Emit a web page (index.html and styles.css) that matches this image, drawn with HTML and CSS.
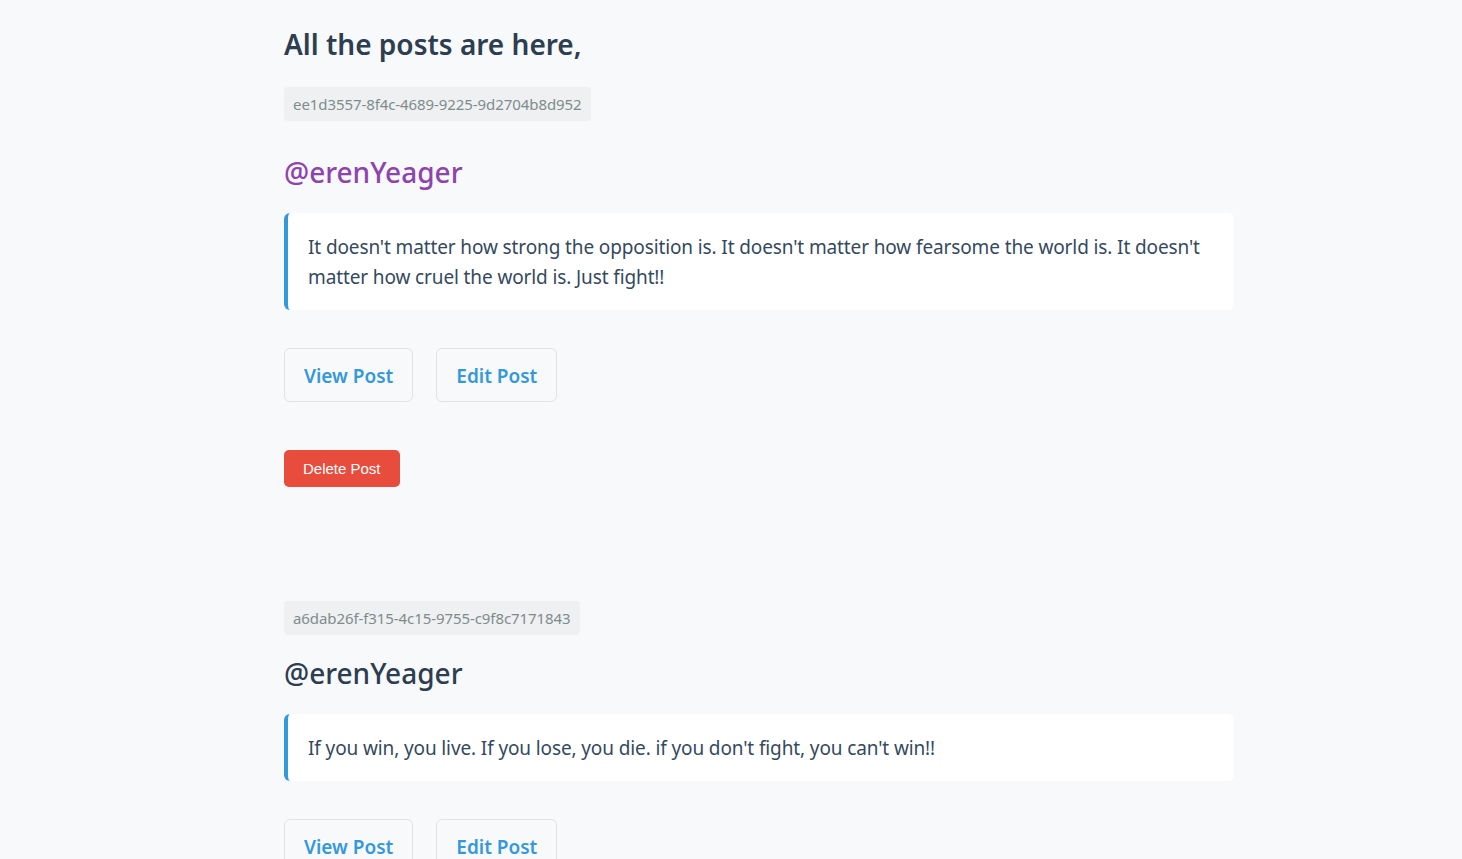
FILE: index.html
```html
<!DOCTYPE html>
<html lang="en">
<head>
<meta charset="utf-8">
<title>Posts</title>
<link rel="stylesheet" href="styles.css">
</head>
<body>
<main class="page">
  <h1 class="title">All the posts are here,</h1>

  <article class="post">
    <span class="post-id">ee1d3557-8f4c-4689-9225-9d2704b8d952</span>
    <h2 class="author author-active">@erenYeager</h2>
    <blockquote class="quote">It doesn't matter how strong the opposition is. It doesn't matter how fearsome the world is. It doesn't matter how cruel the world is. Just fight!!</blockquote>
    <div class="actions">
      <a class="btn-link" href="#">View Post</a>
      <a class="btn-link" href="#">Edit Post</a>
    </div>
    <button class="btn-delete" type="button">Delete Post</button>
  </article>

  <article class="post">
    <span class="post-id">a6dab26f-f315-4c15-9755-c9f8c7171843</span>
    <h2 class="author">@erenYeager</h2>
    <blockquote class="quote">If you win, you live. If you lose, you die. if you don't fight, you can't win!!</blockquote>
    <div class="actions">
      <a class="btn-link" href="#">View Post</a>
      <a class="btn-link" href="#">Edit Post</a>
    </div>
    <button class="btn-delete" type="button">Delete Post</button>
  </article>
</main>
</body>
</html>
```

FILE: styles.css
```css
html, body {
  margin: 0;
  padding: 0;
  background: #f8f9fa;
}

body {
  font-family: "Noto Sans", "Open Sans", sans-serif;
  color: #2c3e50;
}

.page {
  width: 950px;
  margin-left: 284px;
  padding-top: 22px;
}

.title {
  margin: 0 0 21px;
  font-size: 28px;
  font-weight: 600;
  line-height: 44px;
  color: #2c3e50;
}

.post {
  display: flex;
  flex-direction: column;
  align-items: flex-start;
  padding-bottom: 114px;
}

.post-id {
  display: inline-block;
  background: #eef0f1;
  color: #7f8c8d;
  font-size: 15px;
  letter-spacing: -0.08px;
  line-height: 34px;
  padding: 0 9px;
  border-radius: 4px;
}

.author {
  margin: 19px 0 22px;
  font-size: 28px;
  font-weight: 500;
  line-height: 38px;
  color: #2c3e50;
}

.author-active {
  margin-top: 32px;
  color: #8e44ad;
}

.quote {
  box-sizing: border-box;
  width: 100%;
  margin: 0 0 38px;
  padding: 19px 20px 18px;
  background: #ffffff;
  border-left: 4px solid #3498db;
  border-radius: 6px;
  font-size: 19px;
  letter-spacing: -0.12px;
  line-height: 30px;
  color: #34495e;
}

.actions {
  display: flex;
  gap: 23px;
  margin-bottom: 48px;
}

.btn-link {
  display: inline-block;
  box-sizing: border-box;
  height: 54px;
  padding: 0 19px;
  line-height: 54px;
  border: 1px solid #dfe3e6;
  border-radius: 6px;
  background: #f8f9fa;
  color: #3498db;
  font-size: 19px;
  font-weight: 600;
  text-decoration: none;
}

.btn-delete {
  height: 37px;
  padding: 0 19px;
  border: none;
  border-radius: 5px;
  background: #e74c3c;
  color: #ffffff;
  font-family: "Liberation Sans", Arial, sans-serif;
  font-size: 15px;
}
```
